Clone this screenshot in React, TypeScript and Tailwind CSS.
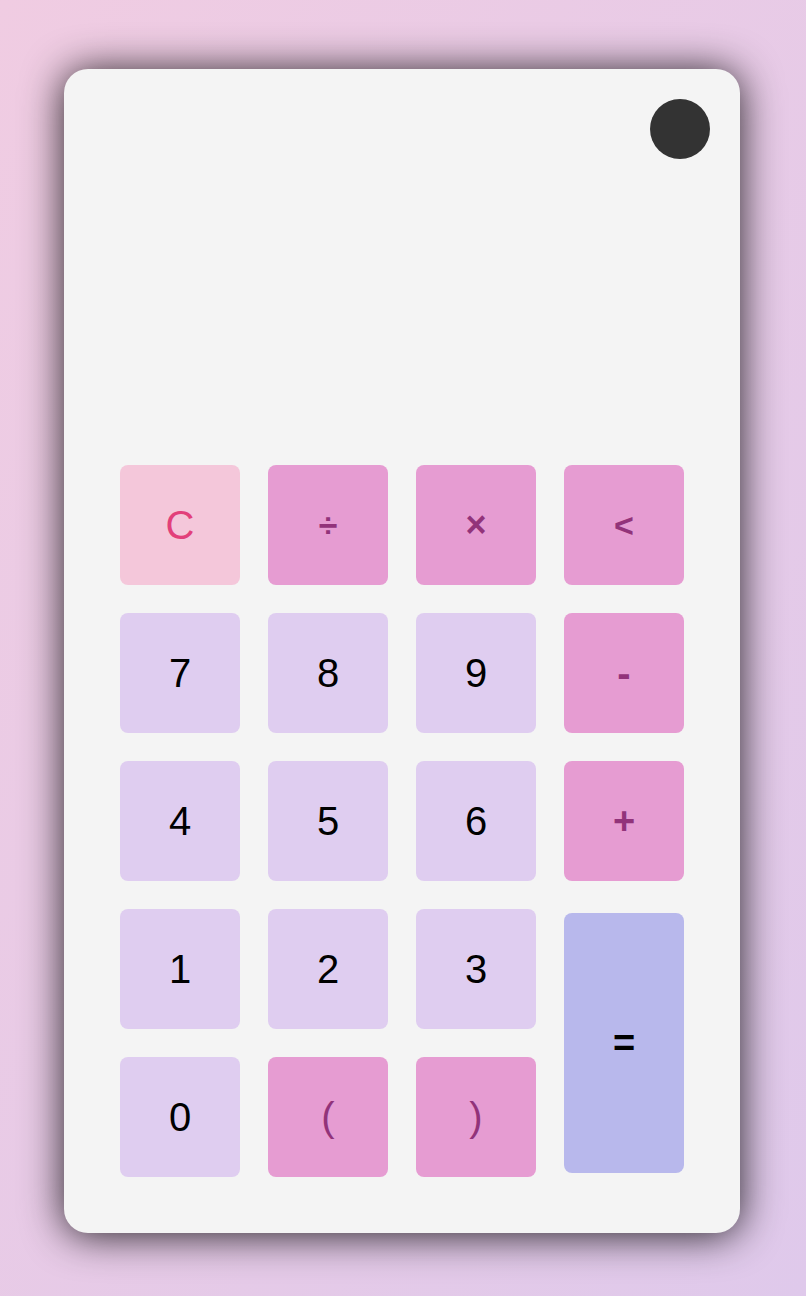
import React from 'react';

type Kind = 'clear' | 'op' | 'num' | 'eq';

interface Key {
  label: string;
  kind: Kind;
  size?: string;
}

const keys: Key[] = [
  { label: 'C', kind: 'clear' },
  { label: '÷', kind: 'op', size: 'text-[34px] font-bold' },
  { label: '×', kind: 'op', size: 'text-[36px] font-bold' },
  { label: '<', kind: 'op', size: 'text-[34px] font-bold' },
  { label: '7', kind: 'num' },
  { label: '8', kind: 'num' },
  { label: '9', kind: 'num' },
  { label: '-', kind: 'op', size: 'text-[40px] font-bold' },
  { label: '4', kind: 'num' },
  { label: '5', kind: 'num' },
  { label: '6', kind: 'num' },
  { label: '+', kind: 'op', size: 'text-[38px] font-bold' },
  { label: '1', kind: 'num' },
  { label: '2', kind: 'num' },
  { label: '3', kind: 'num' },
  { label: '=', kind: 'eq', size: 'text-[38px] font-bold' },
  { label: '0', kind: 'num' },
  { label: '(', kind: 'op' },
  { label: ')', kind: 'op' },
];

const kindClass: Record<Kind, string> = {
  clear: 'bg-[#f4c7da] text-[#e2407a] h-[120px]',
  op: 'bg-[#e69cd2] text-[#92337a] h-[120px]',
  num: 'bg-[#dfcdf0] text-black h-[120px]',
  eq: 'bg-[#b8b8ec] text-black h-[260px] row-span-2 self-center',
};

const App: React.FC = () => {
  return (
    <div className="min-h-screen bg-gradient-to-br from-[#f0cce2] to-[#dfc9eb] pt-[69px] pl-[64px] font-['Liberation_Sans',Arial,sans-serif]">
      <div className="w-[676px] h-[1164px] bg-[#f4f4f4] rounded-[24px] shadow-[0_2px_40px_rgba(0,0,0,0.85)] pt-[30px] px-[30px] pb-14 flex flex-col">
        <div className="h-[366px] flex justify-end items-start">
          <div className="w-[60px] h-[60px] rounded-full bg-[#333333]" />
        </div>
        <div className="mx-[26px] grid grid-cols-[repeat(4,120px)] auto-rows-[120px] gap-[28px]">
          {keys.map((k) => (
            <button
              key={k.label}
              className={`${kindClass[k.kind]} ${k.size ?? 'text-[40px]'} w-[120px] rounded-lg flex items-center justify-center leading-none`}
            >
              {k.label}
            </button>
          ))}
        </div>
      </div>
    </div>
  );
};

export default App;
